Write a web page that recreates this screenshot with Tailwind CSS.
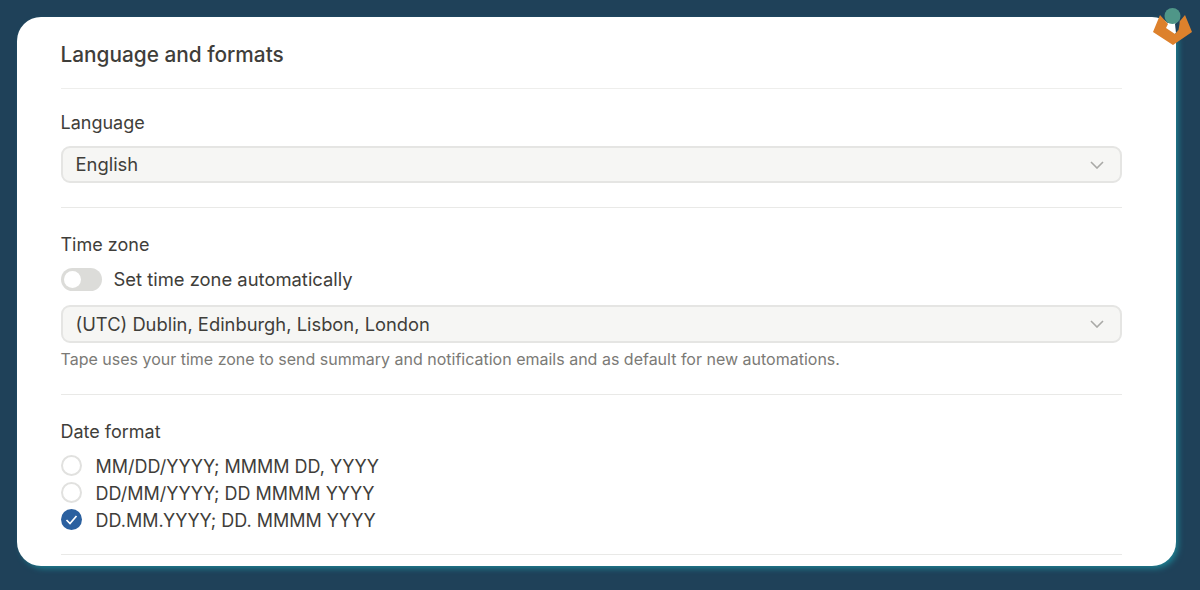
<!DOCTYPE html>
<html>
<head>
<meta charset="utf-8">
<script src="https://cdn.jsdelivr.net/npm/@tailwindcss/browser@4"></script>
</head>
<body class="m-0">
<div class="relative w-[1200px] h-[590px] overflow-hidden bg-[#1f4159] font-['Inter','Liberation_Sans',sans-serif] text-[#3f3e3a] antialiased">
  <div class="absolute left-[17px] top-[17px] w-[1159px] h-[549px] rounded-[24px] bg-white shadow-[3px_3px_6px_-1px_#1d8596]">
    <div class="flex flex-col pl-[43.5px] pr-[54px]">
      <div class="h-[72px] pt-[23px] border-b border-[#eeeeec]">
        <h1 class="text-[20.8px] leading-[30px] font-medium">Language and formats</h1>
      </div>
      <div class="h-[119px] border-b border-[#e9e9e7] pt-[23px]">
        <div class="text-[18px] leading-[22px]">Language</div>
        <div class="mt-[12px] h-[37px] rounded-[9px] border-2 border-[#e5e5e3] bg-[#f6f6f4] flex items-center justify-between pl-[13px] pr-[16px] text-[18.4px]">
          <span>English</span>
          <svg class="w-[14px] h-[8px]" viewBox="0 0 14 8" fill="none" stroke="#a9a9a6" stroke-width="1.6"><path d="M1 1l6 6 6-6"/></svg>
        </div>
      </div>
      <div class="h-[187px] border-b border-[#e9e9e7] pt-[26px]">
        <div class="text-[18px] leading-[22px]">Time zone</div>
        <div class="mt-[12px] flex items-center gap-[12px]">
          <div class="w-[41px] h-[23px] rounded-full bg-[#dcdcd9] p-[3px]"><div class="w-[17px] h-[17px] rounded-full bg-white"></div></div>
          <span class="text-[18.4px] leading-[23px]">Set time zone automatically</span>
        </div>
        <div class="mt-[14px] h-[38px] rounded-[9px] border-2 border-[#e5e5e3] bg-[#f6f6f4] flex items-center justify-between pl-[13px] pr-[16px] text-[18.35px]">
          <span class="pt-[1px]">(UTC) Dublin, Edinburgh, Lisbon, London</span>
          <svg class="w-[14px] h-[8px]" viewBox="0 0 14 8" fill="none" stroke="#a9a9a6" stroke-width="1.6"><path d="M1 1l6 6 6-6"/></svg>
        </div>
        <p class="mt-[6px] text-[16px] leading-[20px] text-[#7b7a76]">Tape uses your time zone to send summary and notification emails and as default for new automations.</p>
      </div>
      <div class="h-[160px] border-b border-[#e9e9e7] pt-[26px]">
        <div class="text-[18px] leading-[22px]">Date format</div>
        <div class="mt-[9px] flex items-center gap-[14px] h-[26px]">
          <div class="w-[21px] h-[21px] rounded-full border-2 border-[#e1e1df] bg-white"></div>
          <span class="text-[18px] pt-[2px]">MM/DD/YYYY; MMMM DD, YYYY</span>
        </div>
        <div class="mt-[1px] flex items-center gap-[14px] h-[26px]">
          <div class="w-[21px] h-[21px] rounded-full border-2 border-[#e1e1df] bg-white"></div>
          <span class="text-[18px] pt-[2px]">DD/MM/YYYY; DD MMMM YYYY</span>
        </div>
        <div class="mt-[1px] flex items-center gap-[14px] h-[26px]">
          <svg class="w-[21px] h-[21px]" viewBox="0 0 21 21"><circle cx="10.5" cy="10.5" r="10.5" fill="#2b609f"/><path d="M5.5 11l3.5 3.5 6.5-7.5" fill="none" stroke="#fff" stroke-width="1.7"/></svg>
          <span class="text-[18px] pt-[2px]">DD.MM.YYYY; DD. MMMM YYYY</span>
        </div>
      </div>
    </div>
  </div>
  <svg class="absolute left-[1152px] top-[6px] w-[42px] h-[40px]" viewBox="0 0 42 40">
    <path d="M16 17 L14 22 L23 28 L26 24 L28 12 Z" fill="#fff"/>
    <path d="M23 18 L28 12 L27 23 L24 27 Z" fill="#1f4159"/>
    <path d="M8 9 L1 26 L21 39 L40 26 L33 9 L28 15 L26.5 24 L23 28 L14 22 L16 18 Z" fill="#dd812c"/>
    <circle cx="20.5" cy="10" r="8" fill="#4f9688"/>
  </svg>
</div>
</body>
</html>
